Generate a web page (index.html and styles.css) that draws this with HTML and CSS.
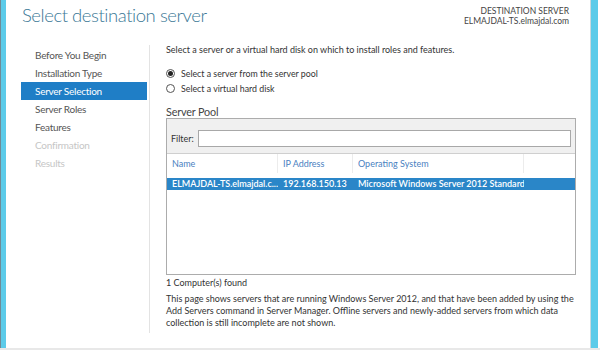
FILE: index.html
```html
<!DOCTYPE html>
<html lang="en">
<head>
<meta charset="utf-8">
<title>Add Roles and Features Wizard</title>
<link rel="stylesheet" href="styles.css">
</head>
<body>
<div class="window">
  <div class="edge-left"></div>
  <div class="page">
    <header class="top">
      <h1 class="title">Select destination server</h1>
      <div class="dest">
        <div>DESTINATION SERVER</div>
        <div>ELMAJDAL-TS.elmajdal.com</div>
      </div>
    </header>
    <div class="content">
      <nav class="steps">
        <div class="step">Before You Begin</div>
        <div class="step">Installation Type</div>
        <div class="step active">Server Selection</div>
        <div class="step">Server Roles</div>
        <div class="step">Features</div>
        <div class="step disabled">Confirmation</div>
        <div class="step disabled">Results</div>
      </nav>
      <main class="main">
        <p class="intro">Select a server or a virtual hard disk on which to install roles and features.</p>
        <div class="choices">
          <label class="choice"><span class="radio checked"></span>Select a server from the server pool</label>
          <label class="choice"><span class="radio"></span>Select a virtual hard disk</label>
        </div>
        <h2 class="pool-title">Server Pool</h2>
        <div class="pool">
          <div class="filter">
            <span class="filter-label">Filter:</span>
            <div class="filter-input"></div>
          </div>
          <div class="list">
            <div class="grid head">
              <div class="cell">Name</div>
              <div class="cell">IP Address</div>
              <div class="cell">Operating System</div>
              <div class="cell"></div>
            </div>
            <div class="grid row selected">
              <div class="cell">ELMAJDAL-TS.elmajdal.c...</div>
              <div class="cell">192.168.150.13</div>
              <div class="cell">Microsoft Windows Server 2012 Standard</div>
              <div class="cell"></div>
            </div>
          </div>
        </div>
        <p class="found">1 Computer(s) found</p>
        <p class="desc">This page shows servers that are running Windows Server 2012, and that have been added by using the<br>Add Servers command in Server Manager. Offline servers and newly-added servers from which data<br>collection is still incomplete are not shown.</p>
      </main>
    </div>
  </div>
  <div class="edge-right"></div>
</div>
<div class="bottom-bar"></div>
</body>
</html>
```
FILE: styles.css
```css
html, body {
  margin: 0;
  padding: 0;
}
body {
  width: 600px;
  height: 350px;
  overflow: hidden;
  background: #ffffff;
  font-family: Lato, "Open Sans", sans-serif;
  color: #444444;
}
.window {
  display: flex;
  height: 348px;
}
.edge-left {
  width: 5px;
  flex-shrink: 0;
  background: #5ccbe9;
  border-left: 1px solid #6f8a96;
}
.edge-right {
  width: 7px;
  flex-shrink: 0;
  background: #5ccbe9;
  border-left: 1px solid #c9d9df;
  margin-right: 2px;
}
.bottom-bar {
  height: 2px;
  background: #e8e8e8;
}
.page {
  flex: 1;
  min-width: 0;
  display: flex;
  flex-direction: column;
  padding-bottom: 15px;
}
.top {
  display: flex;
  justify-content: space-between;
  align-items: flex-start;
  height: 45px;
  box-sizing: border-box;
  padding: 3px 21px 0 16px;
}
.title {
  margin: 0;
  font-size: 18.5px;
  font-weight: 300;
  line-height: 24px;
  letter-spacing: -0.45px;
  color: #3a7896;
}
.dest {
  margin-top: 3px;
  text-align: right;
  font-size: 8.5px;
  line-height: 10px;
  color: #444;
}
.content {
  flex: 1;
  display: flex;
}
.steps {
  width: 129px;
  flex-shrink: 0;
  margin-left: 15px;
  padding-top: 1px;
  box-sizing: border-box;
  border-right: 1px solid #e3e3e3;
}
.step {
  height: 18px;
  line-height: 18px;
  margin-right: 2px;
  padding-left: 14px;
  font-size: 10px;
  letter-spacing: -0.25px;
  color: #555555;
}
.step.active {
  background: #1f7ec6;
  color: #ffffff;
}
.step.disabled {
  color: #c6c6c6;
}
.main {
  flex: 1;
  min-width: 0;
  display: flex;
  flex-direction: column;
  padding: 0 14px 0 16px;
  font-size: 9px;
  color: #333333;
}
.intro {
  margin: 0;
  line-height: 10px;
}
.choices {
  margin-top: 11px;
  display: flex;
  flex-direction: column;
}
.choice {
  display: flex;
  align-items: center;
  height: 15px;
  font-size: 8.8px;
}
.radio {
  width: 9px;
  height: 9px;
  box-sizing: border-box;
  border: 1px solid #555;
  border-radius: 50%;
  margin: 0 6px 0 0;
  display: flex;
  align-items: center;
  justify-content: center;
}
.radio.checked::after {
  content: "";
  width: 5px;
  height: 5px;
  border-radius: 50%;
  background: #222;
}
.pool-title {
  margin: 9px 0 0;
  font-size: 10.8px;
  font-weight: 400;
  line-height: 13px;
  letter-spacing: -0.15px;
  color: #444;
}
.pool {
  height: 157px;
  box-sizing: border-box;
  border: 1px solid #acacac;
  display: flex;
  flex-direction: column;
}
.filter {
  height: 35px;
  box-sizing: border-box;
  background: #f0f0f0;
  border-bottom: 1px solid #cfcfcf;
  display: flex;
  align-items: flex-start;
  padding: 11px 4px 0 4px;
}
.filter-label {
  line-height: 17px;
  margin-right: 4px;
}
.filter-input {
  flex: 1;
  height: 17px;
  box-sizing: border-box;
  background: #ffffff;
  border: 1px solid #a8a8a8;
}
.list {
  flex: 1;
  background: #fff;
}
.grid {
  display: grid;
  grid-template-columns: 111px 75px 171px 1fr;
}
.head {
  height: 19px;
  line-height: 19px;
  color: #4a7fbf;
  margin-bottom: 5px;
}
.head .cell {
  border-right: 1px solid #ececec;
}
.head .cell:last-child {
  border-right: none;
}
.cell {
  padding-left: 5px;
  white-space: nowrap;
  overflow: hidden;
}
.row {
  height: 12px;
  line-height: 12px;
}
.row.selected {
  background: #2a86c8;
  color: #ffffff;
  font-weight: 600;
}
.found {
  margin: 2px 0 0;
  line-height: 12px;
}
.desc {
  margin: 4px 0 0;
  line-height: 12px;
  white-space: nowrap;
}
```
